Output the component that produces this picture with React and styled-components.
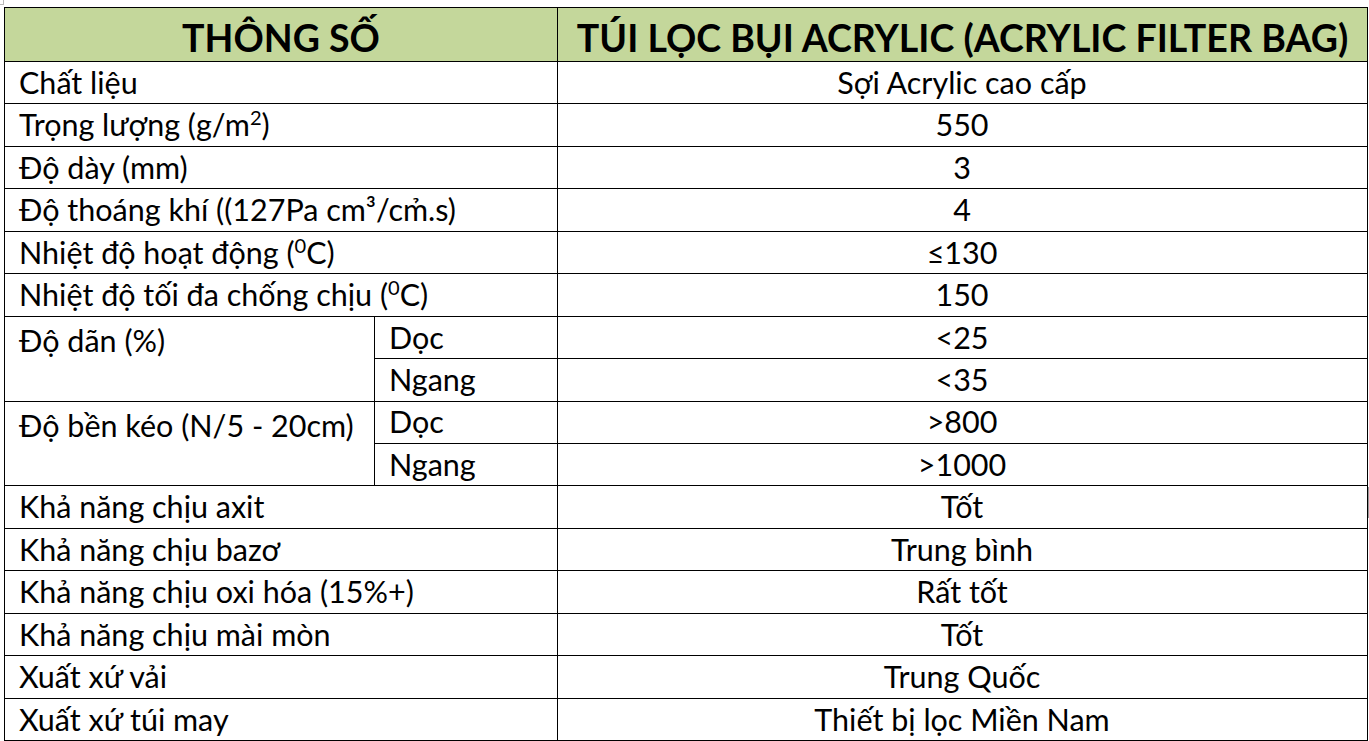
import styled, { createGlobalStyle } from "styled-components";

const GlobalStyle = createGlobalStyle`
  html, body {
    margin: 0;
    padding: 0;
    background: #ffffff;
  }
  body {
    font-family: Lato, "Open Sans", sans-serif;
    color: #000;
  }
`;

const Sheet = styled.div`
  position: relative;
  padding: 7px 0 0 4px;
`;

const CornerMark = styled.span`
  position: absolute;
  left: 0;
  top: 0;
  width: 3px;
  height: 4px;
  border-right: 1px solid #b8b8b8;
  border-bottom: 1px solid #b8b8b8;
`;

const ScrollMark = styled.span`
  position: absolute;
  right: 0;
  top: 487px;
  width: 1px;
  height: 31px;
  background: #9a9a9a;
`;

const SpecTable = styled.table`
  border-collapse: collapse;
  table-layout: fixed;
  width: 1363px;
  font-size: 30.5px;
  line-height: 1;
`;

const HeadRow = styled.tr`
  height: 54px;
  background: #c4d79b;
`;

const HeadCell = styled.th`
  border: 1px solid #000;
  font-weight: 700;
  font-size: 37.5px;
  text-align: center;
  vertical-align: bottom;
  padding: 0 0 5px;
  white-space: nowrap;
`;

const Row = styled.tr`
  height: 42.44px;
`;

const Cell = styled.td`
  border: 1px solid #000;
  padding-bottom: 6px;
  text-align: ${(p) => (p.$center ? "center" : "left")};
  vertical-align: ${(p) => (p.$top ? "top" : "bottom")};
  padding-top: ${(p) => (p.$top ? "8px" : "0")};
  padding-left: ${(p) => (p.$center ? "0" : "14px")};
  white-space: nowrap;
`;

const Sup = styled.sup`
  font-size: 0.66em;
  line-height: 0;
  vertical-align: 0.55em;
`;

const rows = [
  { label: "Chất liệu", value: "Sợi Acrylic cao cấp" },
  {
    label: (
      <>
        Trọng lượng (g/m<Sup>2</Sup>)
      </>
    ),
    value: "550",
  },
  { label: "Độ dày (mm)", value: "3" },
  { label: "Độ thoáng khí ((127Pa cm³/cm\u0309.s)", value: "4" },
  {
    label: (
      <>
        Nhiệt độ hoạt động (<Sup>0</Sup>C)
      </>
    ),
    value: "≤130",
  },
  {
    label: (
      <>
        Nhiệt độ tối đa chống chịu (<Sup>0</Sup>C)
      </>
    ),
    value: "150",
  },
];

const splitRows = [
  { label: "Độ dãn (%)", values: ["<25", "<35"] },
  { label: "Độ bền kéo (N/5 - 20cm)", values: [">800", ">1000"] },
];

const tailRows = [
  { label: "Khả năng chịu axit", value: "Tốt" },
  { label: "Khả năng chịu bazơ", value: "Trung bình" },
  { label: "Khả năng chịu oxi hóa (15%+)", value: "Rất tốt" },
  { label: "Khả năng chịu mài mòn", value: "Tốt" },
  { label: "Xuất xứ vải", value: "Trung Quốc" },
  { label: "Xuất xứ túi may", value: "Thiết bị lọc Miền Nam" },
];

const App = () => {
  return (
    <Sheet>
      <GlobalStyle />
      <CornerMark />
      <ScrollMark />
      <SpecTable>
        <colgroup>
          <col style={{ width: 370 }} />
          <col style={{ width: 183 }} />
          <col style={{ width: 810 }} />
        </colgroup>
        <thead>
          <HeadRow>
            <HeadCell colSpan={2}>THÔNG SỐ</HeadCell>
            <HeadCell>TÚI LỌC BỤI ACRYLIC (ACRYLIC FILTER BAG)</HeadCell>
          </HeadRow>
        </thead>
        <tbody>
          {rows.map((r, i) => (
            <Row key={"a" + i}>
              <Cell colSpan={2}>{r.label}</Cell>
              <Cell $center>{r.value}</Cell>
            </Row>
          ))}
          {splitRows.map((r) => [
            <Row key={r.label + "1"}>
              <Cell rowSpan={2} $top>
                {r.label}
              </Cell>
              <Cell>Dọc</Cell>
              <Cell $center>{r.values[0]}</Cell>
            </Row>,
            <Row key={r.label + "2"}>
              <Cell>Ngang</Cell>
              <Cell $center>{r.values[1]}</Cell>
            </Row>,
          ])}
          {tailRows.map((r, i) => (
            <Row key={"b" + i}>
              <Cell colSpan={2}>{r.label}</Cell>
              <Cell $center>{r.value}</Cell>
            </Row>
          ))}
        </tbody>
      </SpecTable>
    </Sheet>
  );
};

export default App;
